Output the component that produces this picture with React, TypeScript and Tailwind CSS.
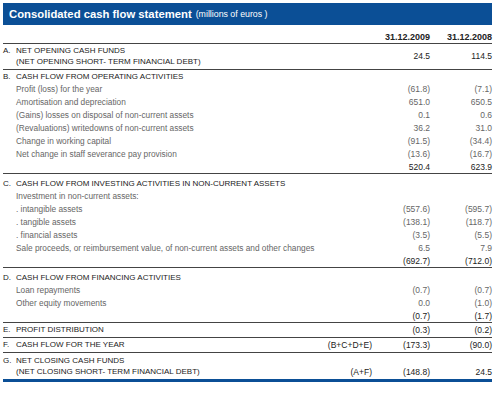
import React from 'react';

const cols = 'grid grid-cols-[minmax(0,1fr)_70px_58px_62px] items-center';

type Item = { label: string; a: string; b: string };

const operating: Item[] = [
  { label: 'Profit (loss) for the year', a: '(61.8)', b: '(7.1)' },
  { label: 'Amortisation and depreciation', a: '651.0', b: '650.5' },
  { label: '(Gains) losses on disposal of non-current assets', a: '0.1', b: '0.6' },
  { label: '(Revaluations) writedowns of non-current assets', a: '36.2', b: '31.0' },
  { label: 'Change in working capital', a: '(91.5)', b: '(34.4)' },
  { label: 'Net change in staff severance pay provision', a: '(13.6)', b: '(16.7)' },
];

const investing: Item[] = [
  { label: 'Investment in non-current assets:', a: '', b: '' },
  { label: '. intangible assets', a: '(557.6)', b: '(595.7)' },
  { label: '. tangible assets', a: '(138.1)', b: '(118.7)' },
  { label: '. financial assets', a: '(3.5)', b: '(5.5)' },
  { label: 'Sale proceeds, or reimbursement value, of non-current assets and other changes', a: '6.5', b: '7.9' },
];

const financing: Item[] = [
  { label: 'Loan repayments', a: '(0.7)', b: '(0.7)' },
  { label: 'Other equity movements', a: '0.0', b: '(1.0)' },
];

function Heading({ letter, title }: { letter: string; title: string }) {
  return (
    <div className={`${cols} h-[13px] text-[#222]`}>
      <div className="flex whitespace-nowrap">
        <span className="w-[13px] shrink-0">{letter}</span>
        <span>{title}</span>
      </div>
    </div>
  );
}

function Items({ rows }: { rows: Item[] }) {
  return (
    <>
      {rows.map((r) => (
        <div key={r.label} className={`${cols} h-[13px] text-[#666] text-[8.5px]`}>
          <span className="pl-[13px] whitespace-nowrap text-[8.3px]">{r.label}</span>
          <span />
          <span className="text-right">{r.a}</span>
          <span className="text-right">{r.b}</span>
        </div>
      ))}
    </>
  );
}

function Total({ a, b }: { a: string; b: string }) {
  return (
    <div className={`${cols} h-[13px] text-[#222] text-[8.5px] border-b border-[#444]`}>
      <span />
      <span />
      <span className="text-right">{a}</span>
      <span className="text-right">{b}</span>
    </div>
  );
}

function Single({ letter, title, formula, a, b }: { letter: string; title: string; formula?: string; a: string; b: string }) {
  return (
    <div className={`${cols} h-[15px] text-[#222] border-b border-[#444]`}>
      <div className="flex whitespace-nowrap">
        <span className="w-[13px] shrink-0">{letter}</span>
        <span>{title}</span>
      </div>
      <span className="text-right text-[8.5px]">{formula}</span>
      <span className="text-right text-[8.5px]">{a}</span>
      <span className="text-right text-[8.5px]">{b}</span>
    </div>
  );
}

export default function App() {
  return (
    <div className="w-[495px] h-[396px] bg-white px-[3px] pt-[3px] font-['Liberation_Sans',Arial,sans-serif] text-[8px] leading-none">
      <div className="h-[22px] bg-[#0b4f96] flex items-end pb-[5px] pl-[6px] text-white">
        <span className="text-[11.3px] font-bold">Consolidated cash flow statement</span>
        <span className="text-[8.8px] ml-[4px] pb-[1px]">(millions of euros )</span>
      </div>

      <div className={`${cols} h-[19px] pt-[6px] border-b border-[#444] text-[9px] font-bold text-[#222]`}>
        <span />
        <span />
        <span className="text-right">31.12.2009</span>
        <span className="text-right">31.12.2008</span>
      </div>

      <div className={`${cols} py-[3px] text-[#222] border-b border-[#444]`}>
        <div className="flex whitespace-nowrap">
          <span className="w-[13px] shrink-0">A.</span>
          <div className="flex flex-col gap-[3px]">
            <span>NET OPENING CASH FUNDS</span>
            <span>(NET OPENING SHORT- TERM FINANCIAL DEBT)</span>
          </div>
        </div>
        <span />
        <span className="text-right text-[8.5px]">24.5</span>
        <span className="text-right text-[8.5px]">114.5</span>
      </div>

      <Heading letter="B." title="CASH FLOW FROM OPERATING ACTIVITIES" />
      <Items rows={operating} />
      <Total a="520.4" b="623.9" />

      <div className="pt-[3px]">
        <Heading letter="C." title="CASH FLOW FROM INVESTING ACTIVITIES IN NON-CURRENT ASSETS" />
      </div>
      <Items rows={investing} />
      <Total a="(692.7)" b="(712.0)" />

      <div className="pt-[3px]">
        <Heading letter="D." title="CASH FLOW FROM FINANCING ACTIVITIES" />
      </div>
      <Items rows={financing} />
      <Total a="(0.7)" b="(1.7)" />

      <Single letter="E." title="PROFIT DISTRIBUTION" a="(0.3)" b="(0.2)" />
      <Single letter="F." title="CASH FLOW FOR THE YEAR" formula="(B+C+D+E)" a="(173.3)" b="(90.0)" />

      <div className={`${cols} items-end pt-[4px] pb-[3px] text-[#222] border-b-[3px] border-[#0b4f96]`}>
        <div className="flex whitespace-nowrap">
          <span className="w-[13px] shrink-0">G.</span>
          <div className="flex flex-col gap-[3px]">
            <span>NET CLOSING CASH FUNDS</span>
            <span>(NET CLOSING SHORT- TERM FINANCIAL DEBT)</span>
          </div>
        </div>
        <span className="text-right text-[8.5px]">(A+F)</span>
        <span className="text-right text-[8.5px]">(148.8)</span>
        <span className="text-right text-[8.5px]">24.5</span>
      </div>
    </div>
  );
}
